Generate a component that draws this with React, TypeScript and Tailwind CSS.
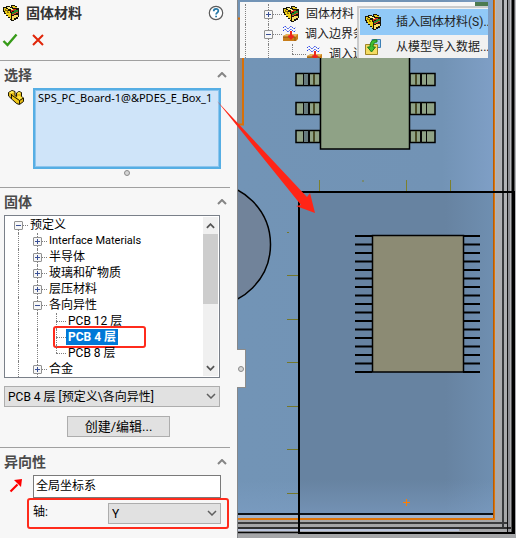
import { useState, type ReactNode } from "react";

const uiFont = "font-['Roboto','Noto_Sans_CJK_SC',sans-serif]";

function SolidMaterialIcon() {
  return (
    <svg width="18" height="18" viewBox="0 0 18 18" aria-hidden="true" className="shrink-0" shapeRendering="crispEdges">
      <path d="M1 3h3V2h4v1h1V1h4v1h2v2h2v9h-1v2h-2v1h-2v1H9v-1H8v-2H6v-2H4v-2H2V8H1z" fill="#17150a" />
      <path d="M2 4h2v1h2v2h2v2h1v6H8v-2H6v-2H4V9H3V7H2z" fill="#f0cf16" />
      <path d="M5 3h3v1h2v1h2v1H9V5H6V4H5z" fill="#fff48a" />
      <path d="M10 2h3v1h2v1h-4V3h-1z" fill="#e8c81a" />
      <path d="M10 8h2V6h4v2h-2v1h-2v1h-2z" fill="#278a2c" />
      <path d="M9 6h2V5h3v1h-2v1h-2v1H9z" fill="#d92a1e" />
      <path d="M10 10h2V9h2V8h2v1h-2v1h-2v1h-2z" fill="#e23a22" />
      <path d="M10 12h2v-1h4v2h-2v1h-2v2h-2z" fill="#f7dc64" />
      <path d="M3 5h1v1h2v2h1v1H5V7H3z" fill="#8d700d" />
    </svg>
  );
}

function PartIcon() {
  return (
    <svg width="18" height="18" viewBox="0 0 18 18" aria-hidden="true" className="shrink-0">
      <path d="M1.500 4.500L5 2.500l3 1v4l1.500 1V5L12 3.500l2.500 1v4l2 1.500v3.500l-4 3-3-1-8-7.500z" fill="#e3b816" stroke="#1c1804" />
      <path d="M2 4.500l3-1.500 2.500 1-3 1.500zM10 5l2-1 2 1-2 1z" fill="#fff05e" />
      <path d="M9.500 9l2.500-1.500 4 2.500-3.500 2z" fill="#ffe23c" />
      <path d="M4.500 6v4.500l8 5V12L8 8.500z" fill="#f2cb1c" />
      <path d="M4.500 6v5M4.500 7l8 5.500 4-2.500M12.500 12.500V16" fill="none" stroke="#1c1804" />
    </svg>
  );
}

function BoundaryIcon() {
  return (
    <svg width="17" height="18" viewBox="0 0 17 18" aria-hidden="true" className="shrink-0">
      <path d="M1 3l2-2 3 3 3-3 3 3 2-2M1 6l2-2 3 3 3-3 3 3 2-2" fill="none" stroke="#2742e8" strokeDasharray="2 1" />
      <path d="M1 11l4-2h11v5l-2 2H1z" fill="#c87d19" />
      <path d="M1 11l4-2h11l-3 3H1z" fill="#e8b458" />
      <path d="M13 12v4M1 12h12" stroke="#8b5410" />
      <path d="M9 6v7M6.500 10.500L9 13.500l2.500-3" fill="none" stroke="#ec251d" strokeWidth="2" />
    </svg>
  );
}

function ImportIcon() {
  return (
    <svg width="18" height="18" viewBox="0 0 18 18" aria-hidden="true" className="shrink-0">
      <path d="M8 1.500h8.500v8H8z" fill="#a9d3f2" stroke="#3d7fb5" />
      <path d="M1.500 6.500h12v10h-12z" fill="#f4dc62" stroke="#a08427" />
      <path d="M13 2C8 1 6 4 6 9H3.500L7.500 14l4-5H9c0-3 1-5 4-5z" fill="#3fbf2f" stroke="#1c7a19" />
    </svg>
  );
}

function Chevron({ up = false, size = 10, color = "#5f5f5f", weight = 1.5 }: { up?: boolean; size?: number; color?: string; weight?: number }) {
  return (
    <svg width={size} height="6" viewBox="0 0 10 6" aria-hidden="true" className="shrink-0">
      <path d={up ? "M1 5l4-4 4 4" : "M1 1l4 4 4-4"} fill="none" stroke={color} strokeWidth={weight} />
    </svg>
  );
}

function Section({ title, children }: { title: string; children: ReactNode }) {
  const [open, setOpen] = useState(true);
  return (
    <section>
      <div className="mr-[7px] border-t border-[#a0a0a0]" />
      <h2 className="flex h-[27px] items-center justify-between pr-[10px] pl-1 text-sm font-bold text-[#4a4a4a]">
        {title}
        <button type="button" aria-label={title} aria-expanded={open} onClick={() => setOpen(!open)}>
          <Chevron up color="#858585" weight={2} />
        </button>
      </h2>
      {open && children}
    </section>
  );
}

function Expander({ open, name }: { open: boolean; name: string }) {
  return (
    <button
      type="button"
      aria-label={name}
      aria-expanded={open}
      className="absolute top-1 left-0 size-[9px] rounded-[1px] border border-[#919191] bg-[#f7f7f7]"
    >
      <svg width="7" height="7" viewBox="0 0 7 7" aria-hidden="true" className="block">
        <path d={open ? "M1 3.500h5" : "M1 3.500h5M3.500 1v5"} stroke="#3b5196" />
      </svg>
    </button>
  );
}

type Row = { label: string; level: number; open?: boolean; selected?: boolean; line: "below" | "full" | "above" };

const rows: Row[] = [
  { label: "预定义", level: 0, open: true, line: "below" },
  { label: "Interface Materials", level: 1, open: false, line: "full" },
  { label: "半导体", level: 1, open: false, line: "full" },
  { label: "玻璃和矿物质", level: 1, open: false, line: "full" },
  { label: "层压材料", level: 1, open: false, line: "full" },
  { label: "各向异性", level: 1, open: true, line: "full" },
  { label: "PCB 12 层", level: 2, line: "full" },
  { label: "PCB 4 层", level: 2, selected: true, line: "full" },
  { label: "PCB 8 层", level: 2, line: "above" },
  { label: "合金", level: 1, open: false, line: "full" },
];

const lineClass = { below: "top-2 bottom-0", full: "inset-y-0", above: "top-0 h-2" };

function TreeRow({ row }: { row: Row }) {
  const latinOnly = /^[\x20-\x7e]+$/.test(row.label);
  return (
    <li role="treeitem" aria-level={row.level + 1} aria-selected={!!row.selected} className="relative flex h-4 items-center">
      {Array.from({ length: row.level }, (_, i) => (
        <span key={i} className="h-full w-[19px] shrink-0 pl-1">
          <span className="block h-full border-l border-dotted border-[#808080]" />
        </span>
      ))}
      <span className="relative h-full w-[14px] shrink-0">
        <span className={`absolute left-1 border-l border-dotted border-[#808080] ${lineClass[row.line]}`} />
        <span className="absolute top-2 right-0 left-1 border-t border-dotted border-[#808080]" />
        {row.open !== undefined && <Expander open={row.open} name={row.label} />}
      </span>
      <span
        className={`h-4 px-[2px] leading-4 whitespace-nowrap ${latinOnly ? "text-[11px]" : ""} ${row.selected ? "bg-[#0078d7] font-bold text-white" : ""}`}
      >
        {row.label}
      </span>
      {row.selected && (
        <span className="pointer-events-none absolute -top-[3px] left-[39px] h-[22px] w-[93px] rounded-[3px] border-2 border-[#ff2b1c]" />
      )}
    </li>
  );
}

function PropertyPanel() {
  return (
    <aside className="w-[237px] shrink-0 bg-[#f7f7f7] text-xs text-black">
      <header className="flex h-[25px] items-center pr-[13px] pl-[2px]">
        <SolidMaterialIcon />
        <h1 className="ml-[6px] flex-1 text-sm font-bold text-[#333]">固体材料</h1>
        <button type="button" aria-label="帮助">
          <svg width="16" height="16" viewBox="0 0 16 16" aria-hidden="true">
            <circle cx="8" cy="8" r="6.700" fill="#fff" stroke="#5a5a5a" strokeWidth="1.200" />
            <path d="M5.700 6.300C5.700 3 10.500 3.200 10.300 6c-.1 1.600-2.200 1.700-2.200 3.500M8.100 10.700v1.600" fill="none" stroke="#2779a7" strokeWidth="1.800" />
          </svg>
        </button>
      </header>
      <div className="flex h-[35px] items-center gap-[14px] pb-[5px] pl-[2px]">
        <button type="button" aria-label="确定">
          <svg width="16" height="14" viewBox="0 0 16 14" aria-hidden="true">
            <path d="M1.500 8l4 4L14.500 1.500" fill="none" stroke="#379b19" strokeWidth="2.400" />
          </svg>
        </button>
        <button type="button" aria-label="取消">
          <svg width="12" height="12" viewBox="0 0 12 12" aria-hidden="true">
            <path d="M1 1l10 10M11 1L1 11" stroke="#e02509" strokeWidth="2" />
          </svg>
        </button>
      </div>

      <Section title="选择">
        <div className="flex gap-[8px] pr-4 pl-[7px]">
          <PartIcon />
          <div className="min-w-0 flex-1">
            <ul
              role="listbox"
              aria-label="选择"
              className="h-[81px] border-2 border-[#56aee4] bg-[#cfe4f9] pl-[3px] ring-1 ring-[#8dc5ee] ring-inset"
            >
              <li role="option" aria-selected="true" className="h-4 font-['Noto_Sans',sans-serif] text-[11px] leading-4 whitespace-nowrap">
                SPS_PC_Board-1@&amp;PDES_E_Box_1
              </li>
            </ul>
            <div className="flex h-[18px] justify-center pt-[1px]">
              <span className="size-[6px] rounded-full border border-[#8a8a8a] bg-[#d5d5d5]" />
            </div>
          </div>
        </div>
      </Section>

      <Section title="固体">
        <div className="pr-[17px] pl-1">
          <div className="flex h-[163px] border border-[#7a8089] bg-white">
            <ul role="tree" aria-label="固体" className="min-w-0 flex-1 overflow-hidden pt-px pl-[9px]">
              {rows.map((row) => (
                <TreeRow key={row.label} row={row} />
              ))}
            </ul>
            <div className="my-[1px] mr-[1px] flex w-[15px] flex-col bg-[#f0f0f0]">
              <button type="button" aria-label="向上" className="flex h-[17px] items-center justify-center">
                <Chevron up size={9} weight={2} color="#555" />
              </button>
              <div className="h-[70px] bg-[#cdcdcd]" />
              <button type="button" aria-label="向下" className="mt-auto flex h-[17px] items-center justify-center">
                <Chevron size={9} weight={2} color="#555" />
              </button>
            </div>
          </div>
          <div className="relative mt-2">
            <select
              aria-label="材料"
              className="block h-[21px] w-full appearance-none border border-[#adadad] bg-[#e1e1e1] pl-[3px] text-xs"
            >
              <option>PCB 4 层 [预定义\各向异性]</option>
            </select>
            <span className="pointer-events-none absolute top-[7px] right-1">
              <Chevron />
            </span>
          </div>
        </div>
        <button
          type="button"
          className="mx-auto mt-[9px] mb-[10px] block h-[21px] w-[103px] border border-[#adadad] bg-[#e1e1e1] text-[13px] leading-[18px]"
        >
          创建/编辑...
        </button>
      </Section>

      <Section title="异向性">
        <div className="flex items-start gap-2 pr-4 pl-[9px]">
          <svg width="16" height="16" viewBox="0 0 16 16" className="mt-[2px] shrink-0" aria-hidden="true">
            <path d="M1.500 14.500l7-7" stroke="#f00" strokeWidth="2.200" />
            <path d="M5 3l8-1-1 8-2.500-2.500-2-2z" fill="#f00" />
          </svg>
          <input aria-label="坐标系" defaultValue="全局坐标系" className="h-[23px] min-w-0 flex-1 border border-[#7a7a7a] bg-white px-[2px] pb-1 text-xs" />
        </div>
        <div className="mr-2 ml-[27px] flex h-[31px] items-center rounded-[3px] border-2 border-[#ff2b1c] pr-[6px] pl-1">
          <label htmlFor="axis" className="w-[75px] pb-1">
            轴:
          </label>
          <div className="relative flex-1">
            <select id="axis" className="block h-[21px] w-full appearance-none border border-[#adadad] bg-[#e1e1e1] pl-[3px] text-xs">
              <option>Y</option>
            </select>
            <span className="pointer-events-none absolute top-[7px] right-1">
              <Chevron />
            </span>
          </div>
        </div>
      </Section>
    </aside>
  );
}

const pinRows = [73, 102, 130];
const leadRows = Array.from({ length: 17 }, (_, i) => 236 + i * 8.5);

function BoardDrawing() {
  return (
    <svg viewBox="237 0 279 538" preserveAspectRatio="xMinYMin slice" className="block w-full" role="img" aria-label="PCB">
      <defs>
        <linearGradient id="board" x1="0" x2="1">
          <stop offset="0" stopColor="#7294b6" />
          <stop offset="0.800" stopColor="#7293b5" />
          <stop offset="1" stopColor="#7f9fc6" />
        </linearGradient>
        <linearGradient id="region" x1="0" x2="1">
          <stop offset="0" stopColor="#6783a1" />
          <stop offset="0.750" stopColor="#6783a1" />
          <stop offset="1" stopColor="#6f8fb1" />
        </linearGradient>
        <linearGradient id="low" x1="0" x2="0" y1="0" y2="1">
          <stop offset="0" stopColor="#80a1c8" stopOpacity="0" />
          <stop offset="1" stopColor="#80a1c8" stopOpacity="0.500" />
        </linearGradient>
        <linearGradient id="rim" x1="0" x2="0" y1="0" y2="1">
          <stop offset="0" stopColor="#b9babe" />
          <stop offset="1" stopColor="#a5a6a8" />
        </linearGradient>
      </defs>
      <rect x="237" y="0" width="279" height="538" fill="url(#rim)" />
      <rect x="237" y="0" width="257" height="514" fill="url(#board)" />
      <rect x="299" y="192" width="195" height="322" fill="url(#region)" />
      <rect x="237" y="480" width="257" height="34" fill="url(#low)" />

      <rect x="237" y="18" width="6" height="106" fill="#898b8e" />
      <path d="M237 18.500h5M243 18v106M237 124.500h7" stroke="#d87008" strokeWidth="2" fill="none" />

      <circle cx="209" cy="244.500" r="61.500" fill="#71839a" stroke="#000" strokeWidth="1.500" />

      {pinRows.map((y) => (
        <g key={y}>
          <path d={`M296 ${y + 0.5}h24v12h-24zM410 ${y + 0.5}h25v12h-25z`} fill="#8fa286" stroke="#000" strokeWidth="1.500" />
          <path d={`M304 ${y + 1}h4v11h-4z`} fill="#66797d" />
          <path d={`M303.500 ${y}v13M426.500 ${y}v13`} stroke="#080808" />
          <path d={`M309 ${y}v13M421 ${y}v13`} stroke="#080808" strokeWidth="2" />
          <path d={`M314 ${y + 1}v11M416 ${y + 1}v11`} stroke="#4a4b26" strokeWidth="2" />
        </g>
      ))}
      <rect x="320.500" y="20" width="89" height="129" fill="#8fa286" stroke="#000" strokeWidth="1.500" />

      <path d="M319.500 180v11M406.500 180v11M362 181h2M450.500 180v11" stroke="#7d802c" />
      <path d="M287 232.500h2M287 275.500h11M287 319.500h11M287 362.500h11M287 406.500h11M287 449.500h11M287 493.500h11" stroke="#74772a" />

      {leadRows.map((y) => (
        <path key={y} d={`M355 ${y}h17M463 ${y}h17`} stroke="#000" strokeWidth="2" />
      ))}
      <rect x="372.500" y="235.500" width="91" height="136.500" fill="#8c8b74" stroke="#000" strokeWidth="1.500" />
      <path d="M403 502.500h7M406.500 499v7" stroke="#ff7f00" />

      <path d="M496 0h5v520h-5z" fill="#a9aaae" fillOpacity="0.500" />
      <path d="M503 0v527" stroke="#383a3d" strokeWidth="2" />
      <path d="M507.500 0v532" stroke="#111" />
      <path d="M509 0v532" stroke="#8d8e94" strokeWidth="2" />
      <path d="M513 0v533" stroke="#000" strokeWidth="3" />

      <path d="M237 516.500h256" stroke="#9fb3ce" strokeWidth="3" />
      <path d="M237 514h256" stroke="#0c1218" strokeWidth="2" />
      <path d="M237 519h258M494 0v520" stroke="#df7508" strokeWidth="2" fill="none" />
      <path d="M493.500 0v518" stroke="#b65c05" />
      <path d="M237 523h270" stroke="#3a3b3d" strokeWidth="2" />
      <path d="M237 530h222" stroke="#bac4dc" strokeWidth="2" />
      <path d="M237 528h274M237 532.500h62" stroke="#080808" strokeWidth="1.600" />
      <path d="M299 192h215v341H299z" fill="none" stroke="#000" strokeWidth="2" />
      <path d="M237.500 0v538" stroke="#85878a" />
    </svg>
  );
}

function FeatureRow({ label, nested = false, open }: { label: string; nested?: boolean; open?: boolean }) {
  return (
    <li className="relative flex h-5 items-center whitespace-nowrap">
      <span className="ml-[5px] h-full border-l border-dotted border-[#808080]" />
      <span className={`relative ml-[18px] h-full shrink-0 ${nested ? "w-[42px]" : "w-[18px]"}`}>
        <span className={`absolute top-0 border-l border-dotted border-[#808080] ${nested ? "left-[28px] h-[10px]" : "left-1 h-5"}`} />
        <span className={`absolute top-[10px] right-0 border-t border-dotted border-[#808080] ${nested ? "left-[28px]" : "left-1"}`} />
        {nested && <span className="absolute inset-y-0 left-1 border-l border-dotted border-[#808080]" />}
        {open !== undefined && (
          <span className="absolute top-[2px] left-0 size-[13px]">
            <Expander open={open} name={label} />
          </span>
        )}
      </span>
      {nested || open ? <BoundaryIcon /> : <SolidMaterialIcon />}
      <span className="ml-[6px]">{label}</span>
    </li>
  );
}

function FeatureTree() {
  return (
    <div className="absolute top-[2px] left-[3px] h-14 w-[248px] overflow-hidden bg-[#f7f7f7] text-xs text-[#222]">
      <ul className="pt-[2px]">
        <FeatureRow label="固体材料" open={false} />
        <FeatureRow label="调入边界条" open />
        <FeatureRow label="调入边" nested />
      </ul>
      <span className="absolute top-0 right-0 h-1 w-[13px] bg-[#4d7a4f]" />
      <div role="menu" className="absolute top-1 right-0 left-[117px] border-t-2 border-l-2 border-[#cbcbcb] bg-[#f1f1f1] pt-px pl-px">
        <button type="button" role="menuitem" className="flex h-[26px] w-full items-center gap-[14px] bg-[#91c9f7] pl-1 whitespace-nowrap">
          <SolidMaterialIcon />
          插入固体材料(S)..
        </button>
        <button type="button" role="menuitem" className="flex h-[24px] w-full items-center gap-[14px] pl-1 whitespace-nowrap">
          <ImportIcon />
          从模型导入数据...
        </button>
      </div>
    </div>
  );
}

export default function App() {
  return (
    <div className={`relative flex overflow-hidden ${uiFont}`}>
      <PropertyPanel />
      <main className="relative min-w-0 flex-1">
        <BoardDrawing />
        <FeatureTree />
        <button
          type="button"
          aria-label="折叠面板"
          className="absolute top-[349px] left-0 flex h-[39px] w-[9px] items-center justify-center border-y border-r border-[#8c8c8c] bg-[#f7f7f7]"
        >
          <span className="size-[6px] shrink-0 rounded-full border border-[#8a8a8a] bg-[#d5d5d5]" />
        </button>
      </main>
      <svg width="110" height="120" viewBox="210 97 110 120" className="pointer-events-none absolute top-[97px] left-[210px]" aria-hidden="true">
        <path d="M217 101L307 197l3-4 5 20-19-7 5-1z" fill="#ff2516" />
      </svg>
    </div>
  );
}
